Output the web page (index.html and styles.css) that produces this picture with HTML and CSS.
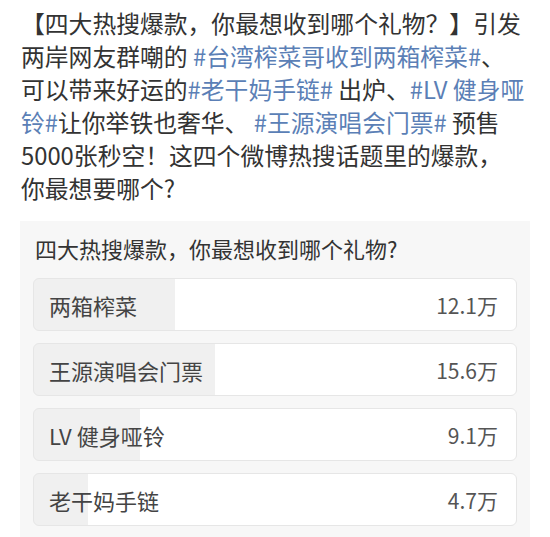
FILE: index.html
```html
<!DOCTYPE html>
<html lang="zh-CN">
<head>
    <meta charset="UTF-8">
    <meta name="viewport" content="width=device-width, initial-scale=1.0">
    <title>四大热搜爆款</title>
    <link rel="stylesheet" href="styles.css">
</head>
<body>

    <div class="post-text">
        【四大热搜爆款，你最想收到哪个礼物？】引发<br>
        两岸网友群嘲的 <a class="topic">#台湾榨菜哥收到两箱榨菜#</a>、<br>
        可以带来好运的<a class="topic">#老干妈手链#</a> 出炉、<a class="topic">#LV 健身哑<br>
        铃#</a>让你举铁也奢华、 <a class="topic">#王源演唱会门票#</a> 预售<br>
        5000张秒空！这四个微博热搜话题里的爆款，<br>
        你最想要哪个?
    </div>

    <div class="poll">
        <div class="poll-title">四大热搜爆款，你最想收到哪个礼物?</div>
        <div class="poll-options">
            <div class="option" style="--share: 29.2%">
                <span class="option-label">两箱榨菜</span>
                <span class="option-count">12.1万</span>
            </div>
            <div class="option" style="--share: 37.6%">
                <span class="option-label">王源演唱会门票</span>
                <span class="option-count">15.6万</span>
            </div>
            <div class="option" style="--share: 21.9%">
                <span class="option-label">LV 健身哑铃</span>
                <span class="option-count">9.1万</span>
            </div>
            <div class="option" style="--share: 11.3%">
                <span class="option-label">老干妈手链</span>
                <span class="option-count">4.7万</span>
            </div>
        </div>
    </div>

</body>
</html>
```

FILE: styles.css
```css
body {
    font-family: 'Noto Sans CJK SC', 'Noto Sans', sans-serif;
    background: #fff;
    margin: 0;
    padding: 6px 20px 0 20px;
    color: #333;
    overflow: hidden;
}
.post-text {
    font-size: 23.8px;
    line-height: 33px;
    padding-left: 1px;
    white-space: nowrap;
}
.topic {
    color: #5b7fb6;
    text-decoration: none;
}
/* Poll card */
.poll {
    margin-top: 17px;
    padding: 12px 13px 20px;
    background: #f7f7f7;
}
.poll-title {
    font-size: 22px;
    line-height: 30px;
    padding-left: 2px;
    color: #333;
    margin-bottom: 15px;
}
.poll-options {
    display: flex;
    flex-direction: column;
    gap: 12px;
}
.option {
    display: flex;
    align-items: center;
    justify-content: space-between;
    height: 53px;
    box-sizing: border-box;
    padding: 0 18px 0 15px;
    border: 1px solid #e6e6e6;
    border-radius: 6px;
    background: linear-gradient(to right, #f0f0f0 var(--share), #fff var(--share));
}
.option-label {
    font-size: 22px;
    color: #444;
}
.option-count {
    font-size: 21px;
    color: #555;
}
```
